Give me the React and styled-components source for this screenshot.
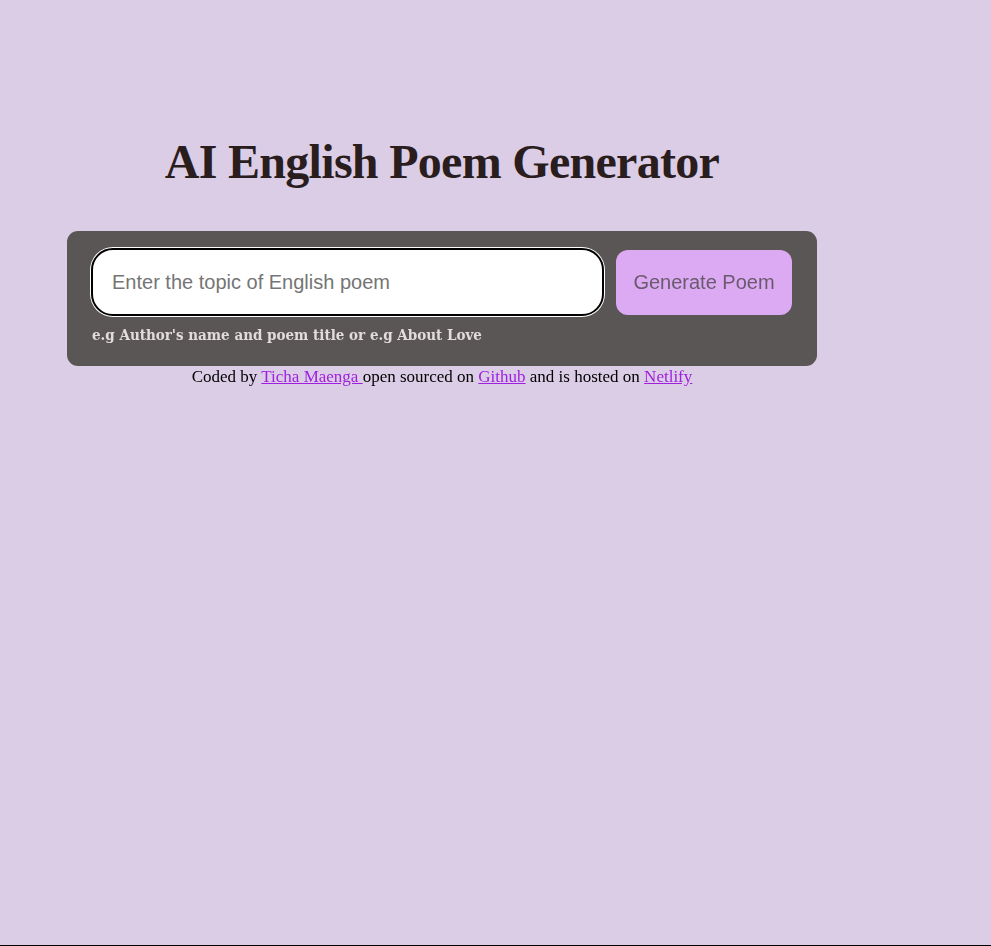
import React from "react";
import styled, { createGlobalStyle } from "styled-components";

const Global = createGlobalStyle`
  html, body { margin: 0; padding: 0; }
  body {
    background: #dccde7;
    min-height: 946px;
    box-sizing: border-box;
    border-bottom: 1px solid #000;
    font-family: "Liberation Serif", serif;
  }
`;

const Page = styled.div`
  padding: 133px 0 0 67px;
`;

const Column = styled.main`
  width: 750px;
  display: flex;
  flex-direction: column;
  align-items: center;
`;

const Title = styled.h1`
  margin: 0 0 40px;
  font-family: "Liberation Serif", serif;
  font-weight: 700;
  font-size: 48px;
  line-height: 58px;
  letter-spacing: -0.7px;
  color: #2a1d1e;
`;

const Card = styled.form`
  box-sizing: border-box;
  width: 750px;
  background: #5a5655;
  border-radius: 11px;
  padding: 17px 25px 22px 23px;
  display: flex;
  flex-direction: column;
  gap: 10px;
`;

const Row = styled.div`
  display: flex;
  align-items: center;
  gap: 11px;
`;

const Input = styled.input`
  box-sizing: border-box;
  flex: 1;
  height: 68px;
  border: 2px solid #000;
  box-shadow: 0 0 0 1px #fff;
  border-radius: 22px;
  margin: 0 1px;
  padding: 0 19px;
  background: #fff;
  font-family: "Liberation Sans", Arial, sans-serif;
  font-size: 20px;
  color: #222;
  outline: none;
  &::placeholder { color: #757575; }
`;

const Button = styled.button`
  width: 176px;
  height: 65px;
  border: none;
  border-radius: 12px;
  background: #dbaaf2;
  color: #6b5a6d;
  font-family: "Liberation Sans", Arial, sans-serif;
  font-size: 20px;
  cursor: pointer;
`;

const Hint = styled.p`
  margin: 0 0 0 2px;
  font-family: "DejaVu Serif Condensed", "DejaVu Serif", Georgia, serif;
  font-stretch: condensed;
  font-weight: 700;
  font-size: 15px;
  line-height: 18px;
  color: #e2dcdc;
`;

const Footer = styled.footer`
  margin-top: 1px;
  font-family: "Liberation Serif", serif;
  font-size: 17px;
  color: #000;
`;

const Link = styled.a`
  color: #a020e0;
  text-decoration: underline;
`;

export default function App() {
  return (
    <>
      <Global />
      <Page>
        <Column>
          <Title>AI English Poem Generator</Title>
          <Card onSubmit={(e) => e.preventDefault()}>
            <Row>
              <Input placeholder="Enter the topic of English poem" autoFocus />
              <Button type="submit">Generate Poem</Button>
            </Row>
            <Hint>e.g Author's name and poem title or e.g About Love</Hint>
          </Card>
          <Footer>
            Coded by <Link href="#">Ticha Maenga </Link>open sourced on{" "}
            <Link href="#">Github</Link> and is hosted on{" "}
            <Link href="#">Netlify</Link>
          </Footer>
        </Column>
      </Page>
    </>
  );
}
